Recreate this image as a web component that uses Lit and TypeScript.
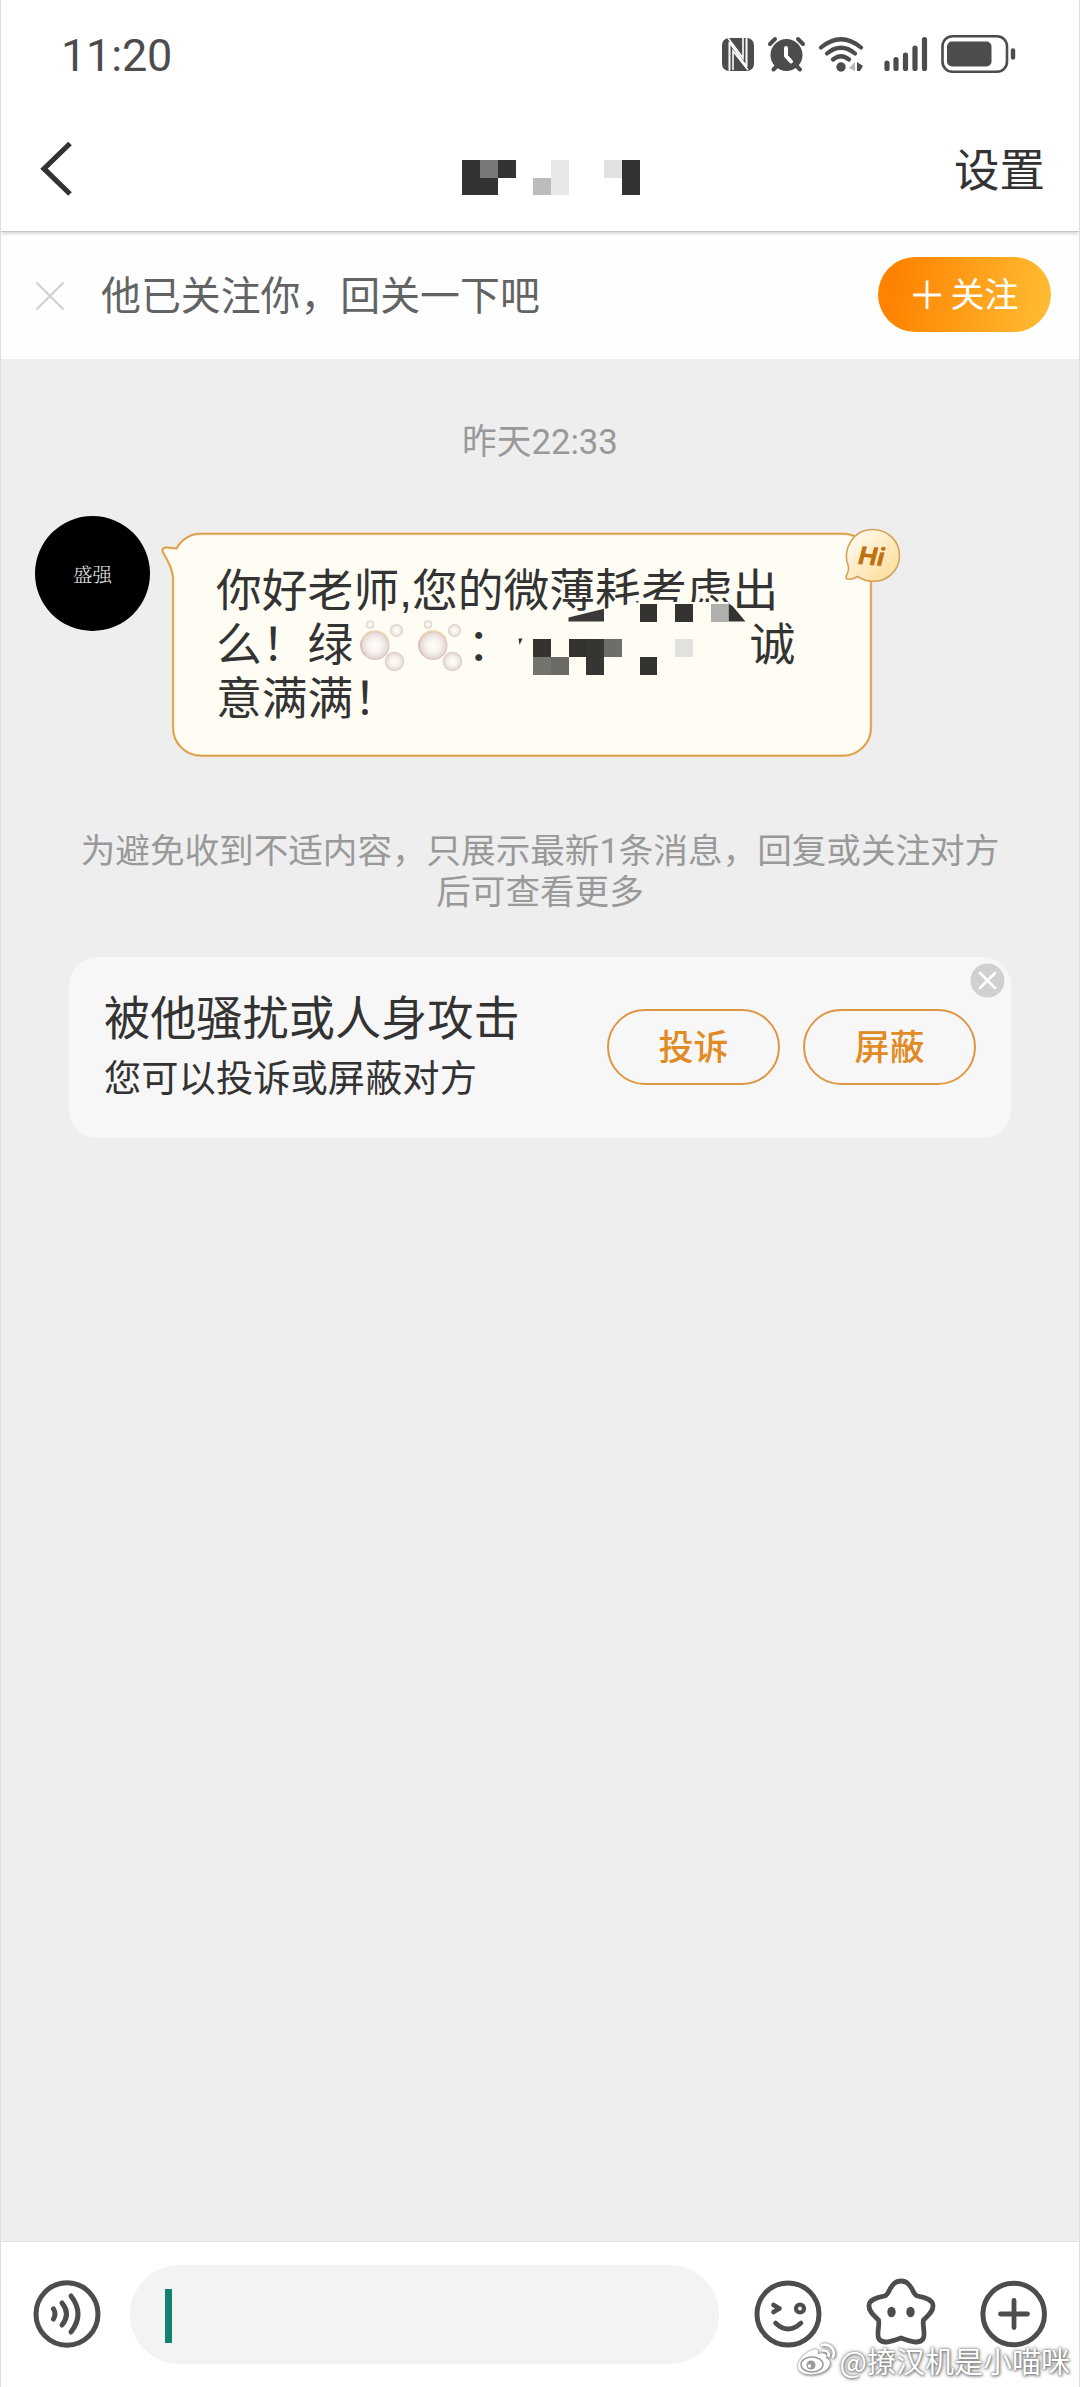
import { LitElement, html, css, svg } from "lit";
import { customElement } from "lit/decorators.js";

type Cell = [number, number, string];

const DARK = "#333333";

/* Column, row, colour of every visible block in the hidden user name. */
const nameCells: Cell[] = [
  [0, 0, DARK], [0, 1, DARK], [1, 0, "#797979"], [1, 1, DARK], [2, 0, DARK],
  [4, 1, "#bcbcbc"], [5, 0, "#e8e8e8"], [5, 1, "#e8e8e8"],
  [8, 0, "#e2e2e2"], [9, 0, DARK], [9, 1, DARK],
];

/* Blocks that hide the contact details inside the message. */
const messageCells: Cell[] = [
  [6, 0, "#343331"], [8, 0, "#343331"], [10, 0, "#b0b0ac"],
  [0, 2, "#343330"], [2, 2, "#333231"], [3, 2, "#353531"], [4, 2, "#6e6e69"], [8, 2, "#e1e1dd"],
  [0, 3, "#74746f"], [1, 3, "#6b6b66"], [3, 3, "#353531"], [6, 3, "#343331"],
];

const blocks = (cells: Cell[], w: number, h: number) =>
  cells.map(([c, r, fill]) => svg`<rect x=${c * w} y=${r * h} width=${w + 0.1} height=${h + 0.1} fill=${fill} />`);

@customElement("status-bar")
class StatusBar extends LitElement {
  static styles = css`
    :host { display: flex; justify-content: space-between; height: 88px; padding: 0 63px 0 61px; }
    .clock { font: 400 45px/60px Roboto, sans-serif; color: #4c4c4c; padding-top: 26px; letter-spacing: -0.2px; }
    .icons { width: 296px; height: 40px; margin-top: 34px; }
  `;
  render() {
    return html`
      <div class="clock">11:20</div>
      <svg class="icons" viewBox="720 34 296 40" fill="none" stroke-linecap="round">
        <rect x="721" y="38" width="32" height="33" rx="7" fill="#4c4c4c" />
        <path d="M728.5 70V42L745.5 67V39" stroke="#fff" stroke-width="2" stroke-linejoin="bevel" />
        <path d="M732 70V51L747 70M727 38L742 58V38" stroke="#fff" stroke-width="1.6" stroke-linecap="butt" />
        <circle cx="785.5" cy="55" r="16" fill="#4c4c4c" />
        <path d="M769 44L774 39M797 39L802 44M776 66L772.5 69.5M795.5 66L799 69.5" stroke="#4c4c4c" stroke-width="4" />
        <path d="M785 48V56L790 61.5" stroke="#fff" stroke-width="4" stroke-linejoin="round" />
        <path d="M820 47.5Q840 31 860 47.5M826 53.5Q840 42 854 53.5M832 59.5Q840 53 848 59.5" stroke="#4c4c4c" stroke-width="4.2" />
        <circle cx="840" cy="67" r="4.7" fill="#4c4c4c" />
        <path d="M854 62V71L848 68Z" fill="#b8b8b8" /><path d="M856 62L862 66L859 71H856Z" fill="#4c4c4c" />
        <path d="M886 63V68.500M895 59.500V68.500M904.500 55V68.500M914 48V68.500M923.500 39.500V68.500" stroke="#4c4c4c" stroke-width="5.2" />
        <rect x="941.500" y="36.200" width="64.500" height="35.600" rx="10" stroke="#4c4c4c" stroke-width="2.600" />
        <rect x="946" y="41.500" width="44.500" height="25" rx="5" fill="#4c4c4c" />
        <path d="M1012 50.500V57.500" stroke="#4c4c4c" stroke-width="4.400" />
      </svg>`;
  }
}

@customElement("chat-header")
class ChatHeader extends LitElement {
  static styles = css`
    :host { display: flex; justify-content: space-between; height: 144px; padding: 0 35px 0 40px;
      border-bottom: 1px solid #c6c6c6; box-shadow: 0 3px 3px -1px rgba(0,0,0,.14); z-index: 1; position: relative; box-sizing: border-box; background: #fff; }
    .back { width: 34px; height: 58px; margin: 52px 57px 0 0; }
    .name { width: 178px; height: 36px; margin-top: 72px; }
    .settings { font-size: 45.500px; line-height: 66px; margin-top: 46px; color: #333; }
    .side { flex: 1; display: flex; }
    .side.end { flex: none; width: 405px; justify-content: flex-end; }
  `;
  render() {
    return html`
      <div class="side"><svg class="back" viewBox="40 140 34 58" fill="none"><path d="M70 143.500L44 168.700L70 194" stroke="#333" stroke-width="5.200" /></svg></div>
      <svg class="name" viewBox="0 0 178 36" shape-rendering="crispEdges">${blocks(nameCells, 17.8, 17.6)}</svg>
      <div class="side end"><div class="settings">设置</div></div>`;
  }
}

@customElement("follow-bar")
class FollowBar extends LitElement {
  static styles = css`
    :host { display: flex; align-items: center; height: 127px; padding: 0 29px 0 35px; box-sizing: border-box; background: #fefefe; }
    .close { width: 30px; height: 30px; margin-right: 36px; }
    .tip { flex: 1; font-size: 39.900px; line-height: 60px; color: #636363; padding-bottom: 6px; }
    .follow { display: flex; align-items: center; justify-content: center; gap: 8px; width: 173px; height: 75px;
      border-radius: 38px; background: linear-gradient(100deg, #ff8200 10%, #ffbb32 95%); color: #fff; font-size: 34px; box-sizing: border-box; margin-top: -2px; line-height: 50px; }
    .plus { width: 32px; height: 32px; }
    .label { margin-top: -3px; }
  `;
  render() {
    return html`
      <svg class="close" viewBox="0 0 30 30"><path d="M1.500 1.500L28.500 28.500M28.500 1.500L1.500 28.500" stroke="#d0d0d0" stroke-width="2.200" /></svg>
      <div class="tip">他已关注你，回关一下吧</div>
      <div class="follow">
        <svg class="plus" viewBox="0 0 32 32"><path d="M16 1.500V30M2 16H30" stroke="#fff" stroke-width="2.800" /></svg>
        <span class="label">关注</span>
      </div>`;
  }
}

@customElement("message-bubble")
class MessageBubble extends LitElement {
  static styles = css`
    :host { display: flex; align-items: flex-start; padding: 0 0 0 35px; }
    .avatar { flex: none; display: flex; align-items: center; justify-content: center; width: 115px; height: 115px; border-radius: 50%;
      background: #000; color: #e8e8e8; font: 300 19.5px/30px "Noto Serif CJK SC", "Noto Sans CJK SC", serif; }
    .bubble { position: relative; width: 700px; height: 225px; margin: 16px 0 0 22px; box-sizing: border-box; padding: 33px 40px 0 44px; }
    .frame { position: absolute; left: -12px; top: -6px; width: 746px; height: 240px; }
    .text { position: relative; font-family: "Liberation Sans", "Noto Sans CJK SC", sans-serif; font-size: 45.800px; line-height: 54px; color: #333; white-space: nowrap; }
    .line { display: flex; height: 54px; }
    .soap { width: 57.700px; height: 54px; }
    .colon { margin-left: -2.500px; }
    .soap:first-of-type { margin-left: 1px; }
    .gap { width: 236.500px; }
    .mask { position: absolute; left: 372px; top: 66px; width: 270px; height: 82px; }
    .badge { position: absolute; left: 670px; top: -6px; width: 60px; height: 62px; }
    .hi { font: italic 800 25px Inter, sans-serif; }
  `;
  private soap = () => html`
    <svg class="soap" viewBox="355 620 57.700 54">
      <defs><radialGradient id="film"><stop offset="0" stop-color="#fffdf7" /><stop offset=".5" stop-color="#f7f2ed" /><stop offset=".85" stop-color="#e5dad7" /><stop offset="1" stop-color="#d9c1bd" /></radialGradient></defs>
      <circle cx="376" cy="646.500" r="14.500" fill="url(#film)" />
      <circle cx="395.500" cy="662.500" r="9.700" fill="url(#film)" />
      <circle cx="397.500" cy="631.500" r="6.500" fill="url(#film)" />
      <circle cx="371" cy="625.500" r="4" fill="url(#film)" />
      <path d="M363 640Q368 632 376 632Q384 632 389 640" fill="none" stroke="#ecd3ae" stroke-width="1.500" />
      <path d="M362.500 641Q360 650 366 656" fill="none" stroke="#dfb9c1" stroke-width="1.500" />
    </svg>`;
  render() {
    return html`
      <div class="avatar">盛强</div>
      <div class="bubble">
        <svg class="frame" viewBox="160 526 746 240">
          <path d="M200 533.700H843A28 28 0 0 1 871 561.700V727.700A28 28 0 0 1 843 755.700H201A28 28 0 0 1 173 727.700V577C172 567 167 559 163 552.500C161.500 549 163 547.300 167 547.500L176.500 548.500C181 540 190 533.700 200 533.700Z" fill="#fffdf3" stroke="#f7d9a4" stroke-width="3" />
          <path d="M200 533.700H843A28 28 0 0 1 871 561.700V727.700A28 28 0 0 1 843 755.700H201A28 28 0 0 1 173 727.700V577C172 567 167 559 163 552.500C161.500 549 163 547.300 167 547.500L176.500 548.500C181 540 190 533.700 200 533.700Z" fill="none" stroke="#d19b4d" stroke-width="1.500" />
        </svg>
        <div class="text">
          <div class="line">你好老师,您的微薄耗考虑出</div>
          <div class="line">么！绿${this.soap()}${this.soap()}<span class="colon">：</span><span class="gap"></span>诚</div>
          <div class="line">意满满！</div>
        </div>
        <svg class="mask" viewBox="544 598 270 82" overflow="visible">
          <path d="M568 618.500L604 609L640 602H728L745.500 621.500V676H530V640L568 622Z" fill="#fffdf3" />
          <path d="M568.500 617.500L604 608.700V621.500H568.500Z" fill="#3b3a38" />
          <path d="M728.500 603.500L732.500 606L745.500 621.500H728.500Z" fill="#343331" />
          <path d="M518.500 638.500H522.500L519.500 645Z" fill="#333" />
          <g transform="translate(533 603.800)" shape-rendering="crispEdges">${blocks(messageCells, 17.76, 17.8)}</g>
        </svg>
        <svg class="badge" viewBox="844 526 60 62">
          <defs><linearGradient id="cream" x1="0" y1="0" x2="1" y2="1"><stop offset=".1" stop-color="#fffaf0" /><stop offset=".75" stop-color="#ffe2a8" /></linearGradient></defs>
          <path d="M874.500 529.500C890 529.500 901.500 541 901.500 555.500C901.500 570 890 581.300 875.500 581.300C869 581.300 864 579.500 859.500 576.500C855 579.500 848 580.500 848 577.500C848.500 574 851.500 570.500 850.500 567C843.500 549 855.500 529.500 874.500 529.500Z" fill="url(#cream)" stroke="#d3a35c" stroke-width="1.600" />
          <text class="hi" x="873.500" y="565" text-anchor="middle" fill="#c07212" transform="rotate(5 873 556)">Hi</text>
        </svg>
      </div>`;
  }
}

@customElement("report-card")
class ReportCard extends LitElement {
  static styles = css`
    :host { position: relative; display: flex; align-items: flex-start; gap: 23px; width: 942px; height: 181px; margin-left: 69px; padding: 0 35px 0 35px;
      box-sizing: border-box; background: #f7f7f7; border-radius: 28px; }
    .words { flex: 1; color: #333; padding-top: 24px; }
    .title { font-size: 46.200px; line-height: 67px; }
    .sub { font-size: 37.300px; line-height: 56px; }
    .button { width: 173px; height: 76px; margin-top: 52px; box-sizing: border-box; border: 2px solid #dd9843; border-radius: 38px;
      color: #e08b23; font-size: 35px; line-height: 68px; text-align: center; font-weight: 500; }
    .close { position: absolute; right: 6px; top: 6px; width: 35px; height: 35px; }
  `;
  render() {
    return html`
      <div class="words">
        <div class="title">被他骚扰或人身攻击</div>
        <div class="sub">您可以投诉或屏蔽对方</div>
      </div>
      <div class="button">投诉</div>
      <div class="button">屏蔽</div>
      <svg class="close" viewBox="0 0 35 35"><circle cx="17.500" cy="17.500" r="17" fill="#d0d0d0" /><path d="M10 10L25 25M25 10L10 25" stroke="#fff" stroke-width="2.800" stroke-linecap="round" /></svg>`;
  }
}

@customElement("input-bar")
class InputBar extends LitElement {
  static styles = css`
    :host { position: relative; display: flex; align-items: center; height: 146px; padding: 0 31px 2px 32px; box-sizing: border-box; background: #fff; border-top: 1px solid #e2e2e2; }
    .icon { flex: none; width: 70px; height: 72px; }
    .field { width: 589px; height: 99px; margin: 2px 34px 0 28px; border-radius: 50px; background: #f3f3f3; display: flex; align-items: center; padding-left: 35px; box-sizing: border-box; }
    .caret { width: 6.500px; height: 54px; background: #128072; margin-top: 3px; }
    .star { margin: 0 43px 0 43px; }
    .mark { position: absolute; right: 10px; bottom: 9px; display: flex; align-items: center; color: #fff; font-size: 29px; line-height: 36px;
      text-shadow: 0 0 2px #777, 1px 1px 3px #777, 0 0 4px #999; }
    .logo { width: 42px; height: 36px; margin-right: 3px; filter: drop-shadow(0 0 1px #777) drop-shadow(1px 1px 1px #999); }
  `;
  render() {
    return html`
      <svg class="icon" viewBox="32 2278 70 72" fill="none" stroke="#4d4d4d" stroke-width="5" stroke-linecap="round">
        <ellipse cx="67" cy="2314" rx="31" ry="31.200" />
        <path d="M53.500 2309Q56.500 2314 53.500 2319M62 2303Q71 2314 62 2325M71 2296Q85 2314 71 2332" />
      </svg>
      <div class="field"><span class="caret"></span></div>
      <svg class="icon" viewBox="753.500 2278 70 72" fill="none" stroke="#4d4d4d" stroke-width="5" stroke-linecap="round" stroke-linejoin="round">
        <circle cx="788.500" cy="2314" r="31" />
        <path d="M774 2305L780 2308.500L774 2312M776 2323Q788.500 2335 801.500 2323" stroke-width="4.600" />
        <circle cx="800.500" cy="2308.500" r="4" stroke-width="4.200" />
      </svg>
      <svg class="icon star" viewBox="866.500 2278 70 72" fill="none" stroke="#4d4d4d" stroke-width="4.800" stroke-linejoin="round">
        <path d="M901.500 2281C907.500 2281 910 2285 912.500 2289C914.500 2293 915 2295 918 2296C926 2297.500 933.500 2299.500 933.500 2306C933.500 2312 929 2315 924 2320C922.500 2325 926.500 2335 923.500 2339C919.500 2344.500 911 2341.500 901.500 2338C892 2341.500 883.500 2344.500 879.500 2339C876.500 2335 880.500 2325 879 2320C874 2315 869.500 2312 869.500 2306C869.500 2299.500 877 2297.500 885 2296C888 2295 888.500 2293 890.500 2289C893 2285 895.500 2281 901.500 2281Z" />
        <ellipse cx="892" cy="2312" rx="4.200" ry="5.200" fill="#4d4d4d" stroke="none" /><ellipse cx="911" cy="2312" rx="4.200" ry="5.200" fill="#4d4d4d" stroke="none" />
      </svg>
      <svg class="icon" viewBox="979 2278 70 72" fill="none" stroke="#4d4d4d" stroke-width="5" stroke-linecap="round">
        <circle cx="1013.700" cy="2314" r="30.800" />
        <path d="M1000.500 2314H1027.500M1014 2300.500V2327.500" stroke-width="4.800" />
      </svg>
      <div class="mark">
        <svg class="logo" viewBox="0 0 42 36" fill="none">
          <path d="M17 8C22 6 24 8 23 12C29 10 33 12 31 16C36 18 36 23 32 27C26 33 9 35 4 28C0 21 9 11 17 8Z" fill="#fff" />
          <ellipse cx="17" cy="22.500" rx="11" ry="7.500" stroke="#999" stroke-width="1.500" />
          <circle cx="16" cy="23" r="4.500" fill="#999" /><circle cx="14.500" cy="24" r="1.700" fill="#fff" />
          <path d="M27 3C35 1 41 8 38 15M28 8.500C32 8 34.500 11 33.500 14" stroke="#fff" stroke-width="2.600" stroke-linecap="round" />
        </svg>
        <span>@撩汉机是小喵咪</span>
      </div>`;
  }
}

@customElement("app-root")
class AppRoot extends LitElement {
  static styles = css`
    :host { display: flex; flex-direction: column; width: 1080px; height: 2387px; box-sizing: border-box; overflow: hidden; position: relative;
      background: #fff; font-family: "Noto Sans CJK SC", sans-serif; }
    .chat { flex: 1; display: flex; flex-direction: column; background: #eee; }
    .time { font-family: Roboto, "Noto Sans CJK SC", sans-serif; font-size: 34.700px; line-height: 50px; text-align: center; color: #999; margin-top: 58px; height: 50px; }
    .message { margin-top: 49px; }
    .notice { font-family: Roboto, "Noto Sans CJK SC", sans-serif; font-size: 34.600px; line-height: 41px; text-align: center; color: #999; margin-top: 74px; height: 82px; }
    .card { margin-top: 44px; }
    .edge { position: absolute; inset: 0; border: solid #dedede; border-width: 0 1px; pointer-events: none; z-index: 2; }
  `;
  render() {
    return html`
      <status-bar></status-bar>
      <chat-header></chat-header>
      <follow-bar></follow-bar>
      <main class="chat">
        <div class="time">昨天22:33</div>
        <message-bubble class="message"></message-bubble>
        <div class="notice">为避免收到不适内容，只展示最新1条消息，回复或关注对方<br />后可查看更多</div>
        <report-card class="card"></report-card>
      </main>
      <input-bar></input-bar>
      <div class="edge"></div>`;
  }
}
